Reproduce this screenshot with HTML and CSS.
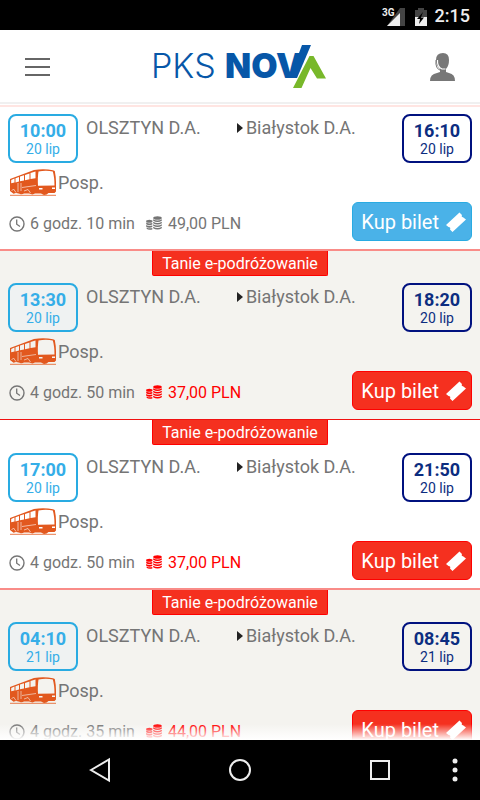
FILE: index.html
```html
<!DOCTYPE html>
<html lang="pl">
<head>
<meta charset="utf-8">
<meta name="viewport" content="width=device-width, initial-scale=1">
<title>PKS NOVA</title>
<link rel="stylesheet" href="styles.css">
</head>
<body>
<svg class="sprite" aria-hidden="true">
  <symbol id="bus" viewBox="0 0 46 27">
    <path fill="#e2581e" d="M0 10L24 1Q34-.4 43 1.2L44.8 2Q46 8 46 13V22.5L44.5 24H38.500Q37 26 34 26L31 24.500H25L22.500 25.500 19 24.500 14 24.500Q12 26 9.500 24.800L6 24 3.500 24.800 0 22z"/>
    <path fill="var(--card)" d="M28.500 2.500Q36 1 42.800 2.500 44.500 8 44.500 16.500L28 16.800Q27.500 8 28.500 2.500zM1.200 11L4.500 9.500V13.500L1.200 14.200zM5.500 9.200L9 8V12.500L5.500 13.400zM10 7.600L14 6.200V11.400L10 12.300zM15 5.900L19.500 4.400V10.200L15 11.200zM20.500 4L25.500 2.600V9.200L20.500 10.100z"/>
    <path fill="none" stroke="var(--card)" stroke-width=".6" d="M12 18.500L26 16.500M8 14V23M11 14V22M14 22L18 20.500 20.500 24M1.500 22L3.500 20 6 23.500"/>
    <path fill="var(--card)" d="M29 19H32.500V20.500H29zM42 18.500H45V20H42z"/>
    <path stroke="#e2581e" stroke-width=".8" d="M0 26.300H46"/>
  </symbol>
  <symbol id="clock" viewBox="0 0 16 16">
    <circle cx="8" cy="8" r="7" fill="none" stroke="currentColor" stroke-width="1.400"/>
    <path d="M7.700 3.500V8.200L11 10.500" fill="none" stroke="currentColor" stroke-width="1.300"/>
  </symbol>
  <symbol id="coins" viewBox="0 0 16 14">
    <g fill="currentColor">
      <ellipse cx="11.500" cy="2" rx="4.300" ry="1.800"/>
      <path d="M7.200 3.200Q11.500 5.800 15.800 3.200V4.800Q11.500 7.400 7.200 4.800zM7.200 5.700Q11.500 8.300 15.800 5.700V7.300Q11.500 9.900 7.200 7.300zM7.200 8.200Q11.500 10.800 15.800 8.200V9.800Q11.500 12.400 7.200 9.800zM7.200 10.700Q11.500 13.300 15.800 10.700V12.300Q11.500 14.900 7.200 12.300z"/>
      <ellipse cx="3.300" cy="5.300" rx="3.200" ry="1.500"/>
      <path d="M.2 6.500Q3 8.200 6.300 7V8.600Q3 9.800.2 8.300zM.2 9Q3 10.700 6.300 9.500V11.100Q3 12.300 .2 10.800zM.6 11.500Q3 12.900 6.300 12V13.400Q2.500 14.200 .6 12.800z"/>
    </g>
  </symbol>
  <symbol id="ticket" viewBox="0 0 20 20">
    <path fill="currentColor" d="M0 13L13.500 .5 16 3Q15 5 17 5.200L20 7.500 6.500 20 4 17.500Q5 15.300 2.500 15z"/>
  </symbol>
</svg>

<div class="status">
  <svg class="status-icons" width="50" height="22" viewBox="0 0 50 22" aria-hidden="true">
    <path fill="#444" d="M19 3H24V21H6z"/>
    <path fill="#eee" d="M19 8V21H6z"/>
    <text class="network" x="1" y="11">3G</text>
    <path fill="#444" d="M37 3H43V5H46V13H34V5H37z"/>
    <path fill="#eee" d="M34 12H46V21H34z"/>
    <path fill="#000" d="M42 7L36 14H39L38 19 43 12.500H40z"/>
  </svg>
  <span class="status-time">2:15</span>
</div>

<header class="header">
  <button class="icon-button" aria-label="Menu">
    <svg width="26" height="20" viewBox="0 0 26 20"><path stroke="#666" stroke-width="2" d="M1 2H26M1 10H26M1 18H26"/></svg>
  </button>
  <svg class="logo" width="176" height="48" viewBox="0 0 176 48" role="img" aria-label="PKS NOVA">
    <text class="logo-light" x="-1" y="35">PKS</text>
    <text class="logo-bold" x="73" y="35">NO</text>
    <text class="logo-bold" x="124" y="35">V</text>
    <path fill="#0757a8" d="M141 26L150 2H159L145 35H138z"/>
    <path fill="#78b82a" d="M157.500 13H161.500L174 35.500H165L158.500 25 149.500 45H141z"/>
  </svg>
  <button class="icon-button" aria-label="Kontakt">
    <svg width="26" height="30" viewBox="0 0 26 30">
      <path fill="#777" d="M0 29Q0 22 7 21L10 20V17Q6 14 6 8 6 1 13 1 19 1 19 8 19 14 16 17V20L19 21Q25 22 25 29z"/>
      <path fill="none" stroke="#fff" stroke-width="1.200" d="M7.500 8Q7 15 12 17H15.500"/>
      <path fill="none" stroke="#777" d="M6 8Q5 17 11 18.500H15"/>
    </svg>
  </button>
</header>

<main class="list">
  <article class="card">
    <div class="trip">
      <time class="stop depart"><b>10:00</b><span>20 lip</span></time>
      <div class="route"><span class="from">OLSZTYN D.A.</span><span class="to">Białystok D.A.</span></div>
      <time class="stop arrive"><b>16:10</b><span>20 lip</span></time>
    </div>
    <div class="carrier"><svg class="bus"><use href="#bus"/></svg>Posp.</div>
    <div class="offer">
      <svg class="clock"><use href="#clock"/></svg><span class="duration">6 godz. 10 min</span>
      <span class="price"><svg class="coins"><use href="#coins"/></svg>49,00 PLN</span>
      <button class="buy">Kup bilet<svg class="ticket"><use href="#ticket"/></svg></button>
    </div>
  </article>

  <article class="card promo">
    <div class="badge">Tanie e-podróżowanie</div>
    <div class="trip">
      <time class="stop depart"><b>13:30</b><span>20 lip</span></time>
      <div class="route"><span class="from">OLSZTYN D.A.</span><span class="to">Białystok D.A.</span></div>
      <time class="stop arrive"><b>18:20</b><span>20 lip</span></time>
    </div>
    <div class="carrier"><svg class="bus"><use href="#bus"/></svg>Posp.</div>
    <div class="offer">
      <svg class="clock"><use href="#clock"/></svg><span class="duration">4 godz. 50 min</span>
      <span class="price"><svg class="coins"><use href="#coins"/></svg>37,00 PLN</span>
      <button class="buy">Kup bilet<svg class="ticket"><use href="#ticket"/></svg></button>
    </div>
  </article>

  <article class="card promo">
    <div class="badge">Tanie e-podróżowanie</div>
    <div class="trip">
      <time class="stop depart"><b>17:00</b><span>20 lip</span></time>
      <div class="route"><span class="from">OLSZTYN D.A.</span><span class="to">Białystok D.A.</span></div>
      <time class="stop arrive"><b>21:50</b><span>20 lip</span></time>
    </div>
    <div class="carrier"><svg class="bus"><use href="#bus"/></svg>Posp.</div>
    <div class="offer">
      <svg class="clock"><use href="#clock"/></svg><span class="duration">4 godz. 50 min</span>
      <span class="price"><svg class="coins"><use href="#coins"/></svg>37,00 PLN</span>
      <button class="buy">Kup bilet<svg class="ticket"><use href="#ticket"/></svg></button>
    </div>
  </article>

  <article class="card promo">
    <div class="badge">Tanie e-podróżowanie</div>
    <div class="trip">
      <time class="stop depart"><b>04:10</b><span>21 lip</span></time>
      <div class="route"><span class="from">OLSZTYN D.A.</span><span class="to">Białystok D.A.</span></div>
      <time class="stop arrive"><b>08:45</b><span>21 lip</span></time>
    </div>
    <div class="carrier"><svg class="bus"><use href="#bus"/></svg>Posp.</div>
    <div class="offer">
      <svg class="clock"><use href="#clock"/></svg><span class="duration">4 godz. 35 min</span>
      <span class="price"><svg class="coins"><use href="#coins"/></svg>44,00 PLN</span>
      <button class="buy">Kup bilet<svg class="ticket"><use href="#ticket"/></svg></button>
    </div>
  </article>
</main>

<nav class="navbar">
  <button class="nav-button" aria-label="Wstecz"><svg width="24" height="26" viewBox="0 0 24 26"><path d="M3 13L21 2.500V23.500z"/></svg></button>
  <button class="nav-button" aria-label="Ekran główny"><svg width="24" height="26" viewBox="0 0 24 26"><circle cx="12" cy="13" r="10"/></svg></button>
  <button class="nav-button" aria-label="Ostatnie"><svg width="24" height="26" viewBox="0 0 24 26"><rect x="3" y="4" width="18" height="18"/></svg></button>
  <button class="more" aria-label="Więcej"><svg width="6" height="26" viewBox="0 0 6 26"><circle cx="3" cy="4" r="2.500"/><circle cx="3" cy="13" r="2.500"/><circle cx="3" cy="22" r="2.500"/></svg></button>
</nav>
</body>
</html>
```

FILE: styles.css
```css
* {
  box-sizing: border-box;
}

body {
  margin: 0;
  height: 100vh;
  display: flex;
  flex-direction: column;
  background: #fff;
  color: #757575;
  font-family: Roboto, "Liberation Sans", sans-serif;
  font-size: 18px;
}

button {
  margin: 0;
  padding: 0;
  border: 0;
  background: none;
  font: inherit;
  color: inherit;
}

svg {
  display: block;
  flex: none;
}

.sprite {
  position: absolute;
  width: 0;
  height: 0;
}

/* System status bar */
.status {
  flex: none;
  height: 30px;
  padding: 2px 10px 0 0;
  display: flex;
  justify-content: flex-end;
  align-items: center;
  gap: 4px;
  background: #000;
  color: #eee;
  line-height: 28px;
}

.status-time {
  font-weight: 500;
}

.network {
  font-size: 10px;
  font-weight: 700;
  fill: #eee;
}

/* App header */
.header {
  flex: none;
  height: 77px;
  padding: 0 24px 1px;
  display: flex;
  justify-content: space-between;
  align-items: center;
  border-bottom: 2px solid #ffe5e2;
  box-shadow: inset 0 -1px #fff, inset 0 -3px #f0f0f0;
}

.logo-light,
.logo-bold {
  font-family: Inter, sans-serif;
  font-size: 34px;
  font-weight: 300;
  fill: #0757a8;
}

.logo-bold {
  font-weight: 900;
}

/* Connections */
.list {
  position: relative;
  flex: 1;
  min-height: 0;
  overflow: hidden;
}

.list::after {
  content: "";
  position: absolute;
  left: 0;
  right: 0;
  bottom: 0;
  height: 16px;
  background: linear-gradient(rgba(255, 255, 255, 0), #fff);
}

.card {
  --card: #fff;
  padding: 7px 8px 8px;
  background: var(--card);
}

.card.promo {
  padding-top: 0;
  border-top: 1px solid #f01010;
}

.card.promo:nth-child(even) {
  --card: #f4f3ef;
  padding-bottom: 9px;
  border-top: 2px solid #f98c88;
}

.badge {
  width: fit-content;
  height: 25px;
  margin: 0 auto 8px;
  padding: 0 9px;
  border: 1px solid #f00;
  border-top: 0;
  border-radius: 0 0 2px 2px;
  background: #f5301f;
  color: #fff;
  font-size: 16px;
  line-height: 25px;
}

.card:nth-child(even) .badge {
  margin-bottom: 7px;
}

.trip {
  display: flex;
  gap: 8px;
}

.stop {
  width: 70px;
  height: 49px;
  flex: none;
  display: flex;
  flex-direction: column;
  align-items: center;
  padding-top: 5px;
  border: 2px solid #29abe2;
  border-radius: 8px;
  background: #fff;
  color: #35aee8;
}

.card:nth-child(even) .depart {
  background: #eff2f2;
}

.card:nth-child(even) .arrive {
  background: var(--card);
}

.arrive {
  border-color: #00117f;
  color: #0c2d80;
}

.stop b {
  line-height: 20px;
}

.stop span {
  font-size: 14px;
  line-height: 16px;
}

.route {
  flex: 1;
  display: flex;
  line-height: 27px;
}

.from {
  width: 49%;
}

.to {
  display: flex;
  align-items: center;
  gap: 3px;
  height: 27px;
}

.to::before {
  content: "";
  border-left: 6px solid #222;
  border-top: 5px solid transparent;
  border-bottom: 5px solid transparent;
}

.carrier {
  display: flex;
  align-items: center;
  gap: 2px;
  height: 39px;
  padding-left: 2px;
}

.bus {
  width: 46px;
  height: 27px;
}

.offer {
  display: flex;
  align-items: center;
  height: 39px;
  font-size: 16px;
}

.clock {
  width: 16px;
  height: 16px;
  margin: 4px 5px 0 1px;
}

.duration,
.price {
  padding-top: 3px;
}

.price {
  display: flex;
  align-items: center;
  gap: 6px;
  margin-left: 11px;
}

.promo .price {
  color: #f00;
}

.coins {
  width: 16px;
  height: 14px;
}

.buy {
  width: 120px;
  height: 39px;
  margin-left: auto;
  display: flex;
  align-items: center;
  justify-content: flex-end;
  gap: 7px;
  padding-right: 5px;
  border: 1px solid #29abe2;
  border-radius: 6px;
  background: #4ab2e8;
  color: #fff;
  font-size: 20px;
}

.promo .buy {
  border-color: #f00;
  background: #f5301f;
}

.ticket {
  width: 20px;
  height: 20px;
}

/* System navigation */
.navbar {
  position: relative;
  flex: none;
  height: 60px;
  padding: 0 30px;
  display: flex;
  align-items: center;
  background: #000;
}

.nav-button {
  flex: 1;
  height: 60px;
  display: flex;
  align-items: center;
  justify-content: center;
}

.nav-button svg {
  fill: none;
  stroke: #eee;
  stroke-width: 2;
}

.more {
  position: absolute;
  right: 22px;
  height: 60px;
  fill: #eee;
}
```
